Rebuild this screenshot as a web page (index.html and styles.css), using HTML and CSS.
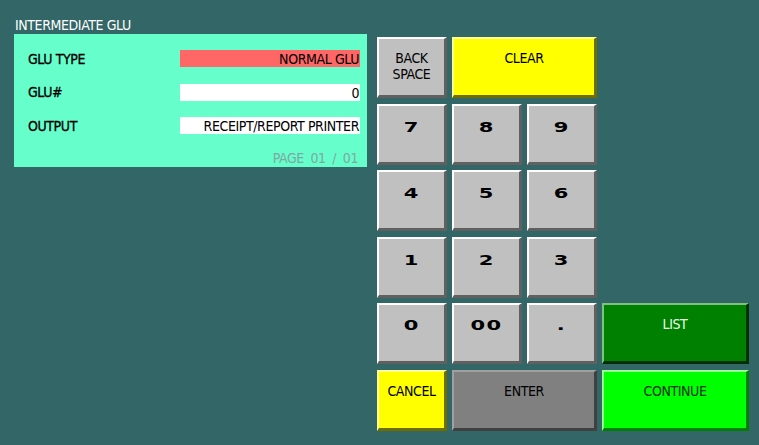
FILE: index.html
```html
<!DOCTYPE html>
<html lang="en">
<head>
    <meta charset="UTF-8" />
    <title>Intermediate GLU</title>
    <link rel="stylesheet" href="styles.css">
</head>
<body>
    <div class="screen">
        <div class="left-col">
            <div class="title">INTERMEDIATE GLU</div>
            <div class="panel">
                <div class="row">
                    <span class="label">GLU TYPE</span>
                    <span class="field field-red">NORMAL GLU</span>
                </div>
                <div class="row">
                    <span class="label">GLU#</span>
                    <span class="field">0</span>
                </div>
                <div class="row">
                    <span class="label">OUTPUT</span>
                    <span class="field">RECEIPT/REPORT PRINTER</span>
                </div>
                <div class="page">PAGE 01 / 01</div>
            </div>
        </div>

        <div class="keypad">
            <button class="key grey">BACK<br>SPACE</button>
            <button class="key yellow wide">CLEAR</button>
            <div class="spacer"></div>

            <button class="key grey num"><span>7</span></button>
            <button class="key grey num"><span>8</span></button>
            <button class="key grey num"><span>9</span></button>
            <div class="spacer"></div>

            <button class="key grey num"><span>4</span></button>
            <button class="key grey num"><span>5</span></button>
            <button class="key grey num"><span>6</span></button>
            <div class="spacer"></div>

            <button class="key grey num"><span>1</span></button>
            <button class="key grey num"><span>2</span></button>
            <button class="key grey num"><span>3</span></button>
            <div class="spacer"></div>

            <button class="key grey num"><span>0</span></button>
            <button class="key grey num"><span>00</span></button>
            <button class="key grey num"><span>.</span></button>
            <button class="key dark-green">LIST</button>

            <button class="key yellow">CANCEL</button>
            <button class="key dark-grey wide">ENTER</button>
            <button class="key bright-green">CONTINUE</button>
        </div>
    </div>
</body>
</html>
```

FILE: styles.css
```css
/* Reset */
* {
    box-sizing: border-box;
    margin: 0;
    padding: 0;
}

body {
    background-color: #336666;
    font-family: 'Liberation Sans Narrow', 'DejaVu Sans Condensed', 'Liberation Sans', sans-serif;
    font-size: 14px;
    letter-spacing: -0.4px;
    width: 759px;
    height: 445px;
    overflow: hidden;
}

.screen {
    display: flex;
    gap: 10px;
    padding: 12px 0 0 14px;
}

/* Left info panel */
.left-col {
    width: 353px;
}

.title {
    height: 22px;
    line-height: 26px;
    padding-left: 1px;
    color: #fff;
}

.panel {
    background-color: #66ffcc;
    height: 133px;
    padding: 16px 7px 0 14px;
    display: flex;
    flex-direction: column;
    gap: 16.5px;
}

.row {
    display: flex;
    justify-content: space-between;
    align-items: center;
    height: 17px;
}

.label {
    color: #000;
    -webkit-text-stroke: 0.3px #000;
}

.field {
    width: 180px;
    height: 17px;
    line-height: 18px;
    background-color: #fff;
    text-align: right;
    padding-right: 1px;
    color: #000;
}

.field-red {
    background-color: #ff6666;
}

.page {
    text-align: right;
    padding-right: 2px;
    margin-top: -1px;
    color: #7fa8a0;
    word-spacing: 3px;
}

/* Keypad */
.keypad {
    margin-top: 25px;
    display: grid;
    grid-template-columns: 70px 70px 70px 147px;
    grid-template-rows: repeat(6, 61px);
    column-gap: 5px;
    row-gap: 5.6px;
}

.key {
    font-family: inherit;
    font-size: 14px;
    letter-spacing: -0.4px;
    line-height: 16px;
    color: #000;
    border-style: solid;
    border-width: 2px 3px 3px 2px;
    padding-top: 11px;
    display: flex;
    flex-direction: column;
    align-items: center;
    justify-content: flex-start;
    text-align: center;
}

.wide {
    grid-column: span 2;
}

.grey {
    background-color: #c0c0c0;
    border-color: #fff #606060 #606060 #fff;
}

.num {
    padding-top: 13px;
}

.num span {
    display: inline-block;
    font-family: 'DejaVu Sans', sans-serif;
    font-weight: bold;
    font-size: 15px;
    letter-spacing: 1px;
    transform: scaleX(1.4) scaleY(0.9);
}

.yellow {
    background-color: #ffff00;
    border-color: #ffff99 #6d6d00 #6d6d00 #ffff99;
}

.dark-grey {
    background-color: #808080;
    border-color: #a0a0a0 #404040 #404040 #a0a0a0;
}

.dark-green {
    background-color: #008000;
    border-color: #80c080 #003000 #003000 #80c080;
    color: #e8ffe8;
}

.bright-green {
    background-color: #00ff00;
    border-color: #99ff99 #008000 #008000 #99ff99;
    color: #003000;
}
```
